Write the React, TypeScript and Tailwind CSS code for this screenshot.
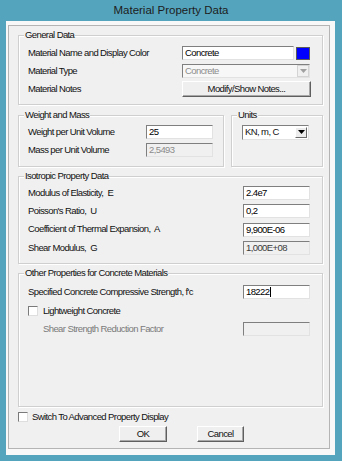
import React from 'react';

const sunken =
  'border border-t-[#7f7f7f] border-l-[#7f7f7f] border-r-[#e2e2e2] border-b-[#e2e2e2]';

const Group = ({
  title,
  className,
  children,
}: {
  title: string;
  className: string;
  children?: React.ReactNode;
}) => {
  return (
    <div
      className={`relative border border-[#cfcfcf] shadow-[inset_1px_1px_0_#ffffff,1px_1px_0_#ffffff] ${className}`}
    >
      <span className="absolute left-[5px] top-[-7px] bg-[#f0f0f0] px-[1px] leading-[12px] whitespace-pre">
        {title}
      </span>
      {children}
    </div>
  );
};

const TextBox = ({
  value,
  width,
  disabled,
  readOnly,
  caret,
}: {
  value: string;
  width: string;
  disabled?: boolean;
  readOnly?: boolean;
  caret?: boolean;
}) => {
  const bg = disabled || readOnly ? 'bg-[#f0f0f0]' : 'bg-white';
  const color = disabled ? 'text-[#8c8c8c]' : readOnly ? 'text-[#3a3a3a]' : 'text-black';
  return (
    <div className={`${sunken} ${bg} ${color} ${width} h-[14px] flex items-center pl-[2px] leading-[12px]`}>
      <span>{value}</span>
      {caret && <span className="ml-[1px] h-[10px] border-l border-black" />}
    </div>
  );
};

const Arrow = ({ color }: { color: string }) => (
  <svg width="7" height="4" viewBox="0 0 7 4">
    <path d="M0 0h7L3.5 4z" fill={color} />
  </svg>
);

const Check = () => (
  <div className="w-[10px] h-[10px] bg-white border border-t-[#7a7a7a] border-l-[#7a7a7a] border-r-[#dedede] border-b-[#dedede]" />
);

const Button = ({ label, className }: { label: string; className: string }) => (
  <div
    className={`h-[16px] flex items-center justify-center bg-[#efefef] border border-t-white border-l-white border-r-[#5f5f5f] border-b-[#5f5f5f] shadow-[inset_-1px_-1px_0_#a8a8a8] leading-[12px] ${className}`}
  >
    {label}
  </div>
);

const Row = ({ label, labelWidth, children, className }: {
  label: string;
  labelWidth: string;
  children?: React.ReactNode;
  className?: string;
}) => (
  <div className={`flex items-center h-[18px] ${className ?? ''}`}>
    <span className={`${labelWidth} whitespace-pre`}>{label}</span>
    {children}
  </div>
);

export default function App() {
  return (
    <div className="w-[342px] h-[461px] bg-[#55a4bd] flex flex-col font-['Liberation_Sans',Arial,sans-serif] text-[9.5px] tracking-[-0.6px] text-[#111]">
      <div className="h-[21px] flex items-center justify-center text-[11.5px] tracking-normal text-[#1c1c1c]">
        Material Property Data
      </div>

      <div className="ml-[6px] w-[329px] h-[434px] bg-[#f8f8f8] pt-[4px] pl-[2px]">
        <div className="w-[322px] h-[424px] border border-[#b4b4b4] bg-[#f0f0f0] pl-[9px] flex flex-col">
          <Group title="General Data" className="mt-[9px] w-[305px] h-[70px] pl-[9px] pt-[8px]">
            <Row label="Material Name and Display Color" labelWidth="w-[154px]">
              <TextBox value="Concrete" width="w-[112px]" />
              <div className="ml-[2px] w-[14px] h-[13px] bg-[#0000ff] border border-[#5a5a5a]" />
            </Row>
            <Row label="Material Type" labelWidth="w-[154px]">
              <div className={`${sunken} bg-[#f7f7f7] w-[128px] h-[14px] flex items-center pl-[2px] text-[#8c8c8c]`}>
                <span className="flex-1">Concrete</span>
                <div className="w-[12px] h-[12px] border border-[#d4d4d4] bg-[#f0f0f0] flex items-center justify-center">
                  <Arrow color="#a0a0a0" />
                </div>
              </div>
            </Row>
            <Row label="Material Notes" labelWidth="w-[154px]">
              <Button label="Modify/Show Notes..." className="w-[129px] h-[15px]" />
            </Row>
          </Group>

          <div className="flex mt-[10px]">
            <Group title="Weight and Mass" className="w-[206px] h-[52px] pl-[9px] pt-[7px]">
              <Row label="Weight per Unit Volume" labelWidth="w-[118px]">
                <TextBox value="25" width="w-[67px]" />
              </Row>
              <Row label="Mass per Unit Volume" labelWidth="w-[118px]">
                <TextBox value="2,5493" width="w-[67px]" disabled />
              </Row>
            </Group>
            <Group title="Units" className="ml-[7px] w-[92px] h-[52px] pl-[10px] pt-[7px]">
              <div className="flex items-center h-[18px]">
                <div className={`${sunken} bg-white w-[67px] h-[15px] flex items-center pl-[2px]`}>
                  <span className="flex-1">KN, m, C</span>
                  <div className="w-[12px] h-[11px] mr-[1px] bg-[#ececec] border border-t-white border-l-white border-r-[#6a6a6a] border-b-[#6a6a6a] flex items-center justify-center">
                    <Arrow color="#000000" />
                  </div>
                </div>
              </div>
            </Group>
          </div>

          <Group title="Isotropic Property Data" className="mt-[9px] w-[305px] h-[88px] pl-[9px] pt-[7px]">
            <Row label="Modulus of Elasticity,  E" labelWidth="w-[215px]">
              <TextBox value="2.4e7" width="w-[67px]" />
            </Row>
            <Row label="Poisson's Ratio,  U" labelWidth="w-[215px]">
              <TextBox value="0,2" width="w-[67px]" />
            </Row>
            <Row label="Coefficient of Thermal Expansion,  A" labelWidth="w-[215px]" className="h-[19px]">
              <TextBox value="9,900E-06" width="w-[67px]" />
            </Row>
            <Row label="Shear Modulus,  G" labelWidth="w-[215px]">
              <TextBox value="1,000E+08" width="w-[67px]" readOnly />
            </Row>
          </Group>

          <Group title="Other Properties for Concrete Materials" className="mt-[9px] w-[305px] h-[134px] pl-[9px] pt-[9px]">
            <Row label="Specified Concrete Compressive Strength, f'c" labelWidth="w-[215px]">
              <TextBox value="18222" width="w-[67px]" caret />
            </Row>
            <div className="flex items-center h-[20px]">
              <Check />
              <span className="ml-[5px]">Lightweight Concrete</span>
            </div>
            <div className="flex items-center h-[16px]">
              <span className="w-[215px] pl-[15px] text-[#7a7a7a]">Shear Strength Reduction Factor</span>
              <TextBox value="" width="w-[67px]" disabled />
            </div>
          </Group>

          <div className="flex items-center h-[10px] mt-[5px]">
            <Check />
            <span className="ml-[4px]">Switch To Advanced Property Display</span>
          </div>

          <div className="flex mt-[4px]">
            <Button label="OK" className="ml-[101px] w-[48px]" />
            <Button label="Cancel" className="ml-[30px] w-[47px]" />
          </div>
        </div>
      </div>
    </div>
  );
}
